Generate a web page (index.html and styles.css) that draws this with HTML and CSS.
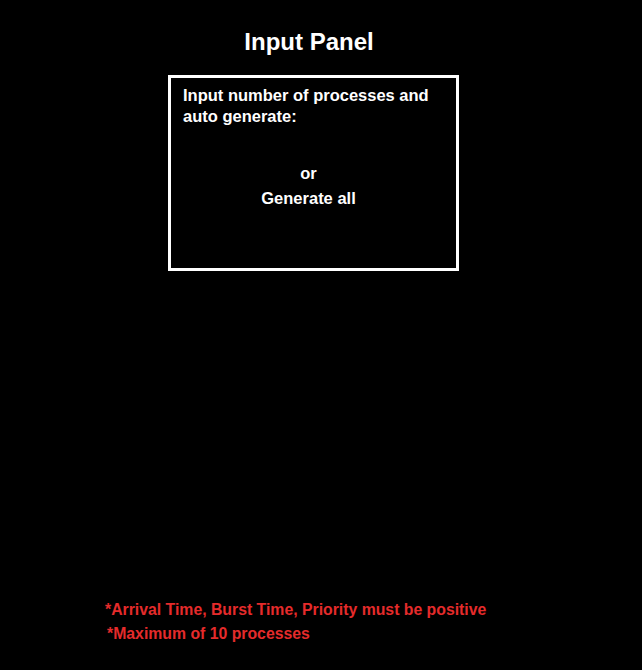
FILE: index.html
```html
<!DOCTYPE html>
<html>
<head>
<meta charset="utf-8">
<link rel="stylesheet" href="styles.css">
</head>
<body>
<div class="page">
  <h2 class="title">Input Panel</h2>
  <div class="panel">
    <p class="prompt">Input number of processes and auto generate:</p>
    <p class="or">or</p>
    <p class="gen">Generate all</p>
  </div>
  <div class="spacer"></div>
  <div class="notes">
    <p class="note">*Arrival Time, Burst Time, Priority must be positive</p>
    <p class="note second">*Maximum of 10 processes</p>
  </div>
</div>
</body>
</html>
```
FILE: styles.css
```css
html, body {
  margin: 0;
  padding: 0;
  background: #000;
}
body {
  font-family: "Liberation Sans", Arial, sans-serif;
  color: #fff;
}
.page {
  width: 642px;
  height: 670px;
  display: flex;
  flex-direction: column;
}
.title {
  width: 618px;
  margin: 28px 0 0 0;
  font-size: 24px;
  font-weight: bold;
  line-height: 28px;
  text-align: center;
}
.panel {
  box-sizing: border-box;
  margin: 19px 0 0 168px;
  width: 291px;
  height: 196px;
  border: 3px solid #fff;
  padding: 7px 12px 0 12px;
}
.panel p {
  margin: 0;
  font-size: 16.5px;
  font-weight: bold;
  line-height: 21px;
}
.or {
  margin-top: 36px !important;
  text-align: center;
  padding-right: 10px;
}
.gen {
  margin-top: 4px !important;
  text-align: center;
  padding-right: 10px;
}
.spacer {
  flex: 1;
}
.notes {
  margin: 0 0 24px 105px;
}
.note {
  margin: 0;
  color: #e52b2b;
  font-size: 15.8px;
  font-weight: bold;
  line-height: 24px;
}
.second {
  padding-left: 2px;
}
```
